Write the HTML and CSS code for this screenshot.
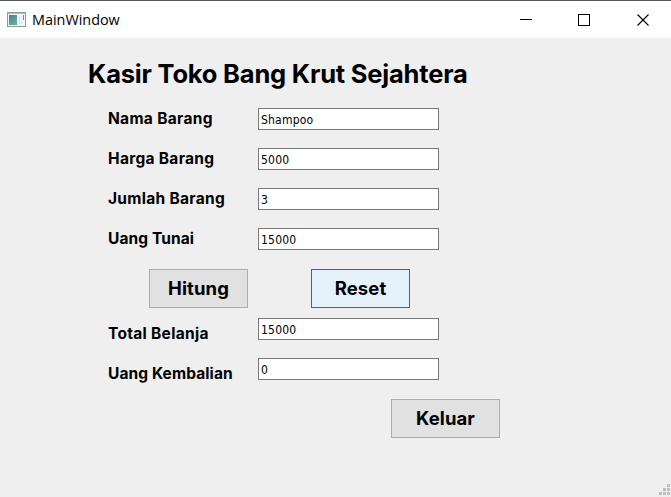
FILE: index.html
```html
<!DOCTYPE html>
<html lang="id">
<head>
<meta charset="utf-8">
<title>MainWindow</title>
<link rel="stylesheet" href="styles.css">
</head>
<body>
<header class="titlebar">
  <svg class="app-icon" width="19" height="16" viewBox="0 0 19 16">
    <rect x=".5" y=".5" width="18" height="14" fill="#f4f7f8" stroke="#8d999f"/>
    <path d="M1 1.5h17" stroke="#b4c0c6"/>
    <defs><linearGradient id="pane" x2=".6" y2="1"><stop stop-color="#527b9d"/><stop offset="1" stop-color="#65b090"/></linearGradient></defs>
    <rect x="2" y="3" width="8" height="10" fill="url(#pane)"/>
    <path d="M16.5 3v5" stroke="#7d878b"/>
    <path d="M12.5 4v8M14.5 9v3" stroke="#dce3e5"/>
  </svg>
  <span class="window-title">MainWindow</span>
  <svg class="controls" width="130" height="12" viewBox="0 0 130 12" fill="none" stroke="#000" shape-rendering="crispEdges">
    <path d="M0 5.5h12"/>
    <rect x="58.5" y=".5" width="11" height="11"/>
    <path d="M117.5 .5l11 11M128.5 .5l-11 11" shape-rendering="auto" stroke-width="1.1"/>
  </svg>
</header>
<main>
  <h1>Kasir Toko Bang Krut Sejahtera</h1>
  <div class="fields">
    <label for="nama">Nama Barang</label><input id="nama" value="Shampoo">
    <label for="harga">Harga Barang</label><input id="harga" value="5000">
    <label for="jumlah">Jumlah Barang</label><input id="jumlah" value="3">
    <label for="tunai" class="snug">Uang Tunai</label><input id="tunai" value="15000">
  </div>
  <div class="actions">
    <button>Hitung</button>
    <button class="active">Reset</button>
  </div>
  <div class="fields results">
    <label for="total">Total Belanja</label><input id="total" value="15000">
    <label for="kembalian" class="snug">Uang Kembalian</label><input id="kembalian" value="0">
  </div>
  <button class="exit">Keluar</button>
</main>
<svg class="grip" width="11" height="11" viewBox="0 0 11 11" fill="#bfbfbf">
  <path d="M8 0h3v3h-3zM4 4h3v3h-3zM8 4h3v3h-3zM0 8h3v3h-3zM4 8h3v3h-3zM8 8h3v3h-3z"/>
</svg>
</body>
</html>
```
FILE: styles.css
```css
* { box-sizing: border-box; }
body {
  margin: 0;
  height: 497px;
  overflow: hidden;
  background: #efefef;
  color: #000;
  font-family: Inter, sans-serif;
}
.titlebar {
  display: flex;
  align-items: center;
  height: 38px;
  padding: 0 21px 0 7px;
  background: #fff;
  border-top: 1px solid #555;
}
.window-title {
  margin-left: 6px;
  font: 14.4px "Open Sans", sans-serif;
}
.controls { margin-left: auto; }
main { padding: 18px 0 0 88px; }
h1 {
  margin: 0;
  height: 36px;
  line-height: 36px;
  font-size: 25.5px;
  font-weight: 650;
  letter-spacing: -.2px;
  white-space: nowrap;
}
.fields {
  display: grid;
  grid-template-columns: 150px 181px;
  grid-auto-rows: 22px;
  row-gap: 18px;
  padding: 16px 0 0 20px;
}
label {
  line-height: 22px;
  font-size: 15.5px;
  font-weight: 650;
  letter-spacing: .3px;
  white-space: nowrap;
}
.snug { letter-spacing: .1px; }
input {
  width: 181px;
  height: 22px;
  padding: 1px 2px 0;
  border: 1px solid #7a7a7a;
  background: #fff;
  color: #000;
  font: 12px "DejaVu Sans Condensed", "DejaVu Sans", sans-serif;
  font-stretch: condensed;
  letter-spacing: .2px;
}
.actions {
  display: flex;
  gap: 63px;
  margin: 19px 0 0 61px;
}
button {
  width: 99px;
  height: 39px;
  padding: 0 0 1px;
  border: 1px solid #adadad;
  border-radius: 0;
  background: #e1e1e1;
  color: #000;
  font: 650 18.5px Inter, sans-serif;
  letter-spacing: .1px;
}
.active { border-color: #0f78ae; background: #e5f1fb; }
.results { padding-top: 10px; }
.results label { padding-top: 5px; }
.exit {
  display: block;
  width: 109px;
  margin: 19px 0 0 303px;
}
.grip {
  position: absolute;
  right: 1px;
  bottom: 2px;
}
```
